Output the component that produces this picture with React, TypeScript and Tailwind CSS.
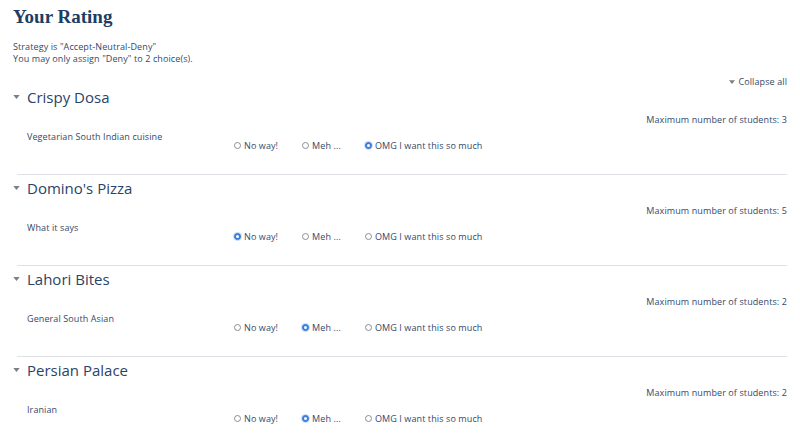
import React from 'react';

type Choice = 0 | 1 | 2;

interface Option {
  name: string;
  description: string;
  max: number;
  choice: Choice;
}

const options: Option[] = [
  { name: 'Crispy Dosa', description: 'Vegetarian South Indian cuisine', max: 3, choice: 2 },
  { name: "Domino's Pizza", description: 'What it says', max: 5, choice: 0 },
  { name: 'Lahori Bites', description: 'General South Asian', max: 2, choice: 1 },
  { name: 'Persian Palace', description: 'Iranian', max: 2, choice: 1 },
];

const labels = ['No way!', 'Meh ...', 'OMG I want this so much'];

function Caret({ className = '' }: { className?: string }) {
  return (
    <svg viewBox="0 0 8 5" className={className} fill="currentColor">
      <path d="M0 0h8L4 5z" />
    </svg>
  );
}

function Radio({ checked, label }: { checked: boolean; label: string }) {
  return (
    <label className="flex items-center gap-[3px]">
      <span
        className={
          checked
            ? 'flex h-[7px] w-[7px] items-center justify-center rounded-full border border-[#3b7ddd] bg-[#3b7ddd] shadow-[0_0_0_1px_rgba(59,125,221,0.25)]'
            : 'h-[7px] w-[7px] rounded-full border border-[#8a8f96] bg-white'
        }
      >
        {checked && <span className="h-[3px] w-[3px] rounded-full bg-white" />}
      </span>
      <span>{label}</span>
    </label>
  );
}

export default function App() {
  return (
    <div
      className="h-[445px] w-[800px] overflow-hidden bg-white px-[13px] text-[#33496b]"
      style={{ fontFamily: '"Open Sans", sans-serif' }}
    >
      <h1
        className="pt-[5px] text-[19px] font-bold leading-[24px] text-[#1d3d63]"
        style={{ fontFamily: '"Liberation Serif", serif' }}
      >
        Your Rating
      </h1>

      <div className="mt-[12px] text-[9px] leading-[12px] tracking-[0.1px]">
        <p>Strategy is "Accept-Neutral-Deny"</p>
        <p>You may only assign "Deny" to 2 choice(s).</p>
      </div>

      <div className="mt-[11px] flex items-center justify-end gap-[3px] text-[9px] leading-[11px] tracking-[0.1px]">
        <Caret className="h-[4px] w-[6px] text-[#7a8088]" />
        <span>Collapse all</span>
      </div>

      <div>
        {options.map((opt, i) => (
          <section key={opt.name}>
            {i > 0 && <div className="ml-[4px] border-t border-[#dee2e6]" />}
            <div className={i > 0 ? 'pt-[3px]' : ''}>
              <div className="flex items-center gap-[7px]">
                <Caret className="h-[4px] w-[7px] text-[#7a8088]" />
                <h2 className="text-[15px] leading-[20px] text-[#2a4468]">{opt.name}</h2>
              </div>
              <p className="mt-[7px] text-right text-[9px] leading-[11px] tracking-[0.1px]">
                Maximum number of students: {opt.max}
              </p>
              <div className="mt-[6px] flex pl-[14px] text-[9px] leading-[11px] tracking-[0.1px]">
                <div className="w-[207px]">{opt.description}</div>
                <div className="mt-[9px] flex gap-[24px]">
                  {labels.map((l, k) => (
                    <Radio key={l} label={l} checked={opt.choice === k} />
                  ))}
                </div>
              </div>
              <div className="h-[23px]" />
            </div>
          </section>
        ))}
      </div>
    </div>
  );
}
